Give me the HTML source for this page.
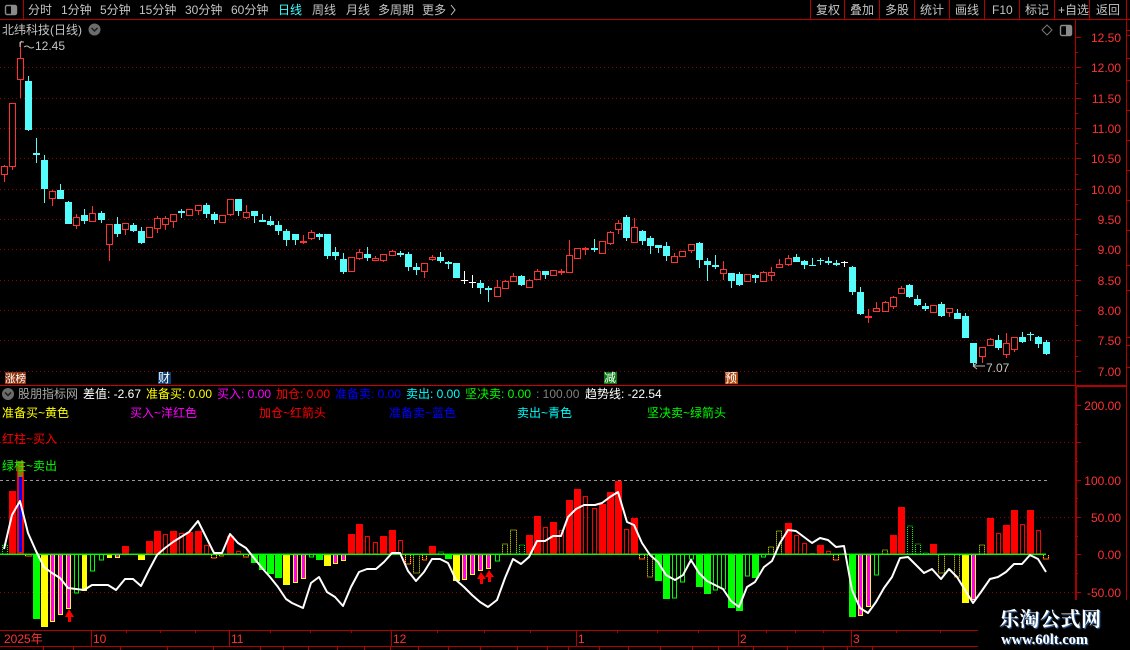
<!DOCTYPE html>
<html lang="zh">
<head>
<meta charset="utf-8">
<title>北纬科技(日线)</title>
<style>
html,body{margin:0;padding:0;background:#000;width:1130px;height:650px;overflow:hidden}
svg{position:absolute;left:0;top:0;display:block}
text{font-family:"Liberation Sans","WenQuanYi Zen Hei","Noto Sans CJK SC",sans-serif;font-size:12px;white-space:pre}
.tb text{fill:#c4c4c4}
.ax text{fill:#ff3232;text-anchor:end}
.wm{position:absolute;color:#fff;white-space:nowrap;font-weight:bold;text-shadow:1px 1px 1px #3f78c0}
</style>
</head>
<body>
<svg width="1130" height="650" viewBox="0 0 1130 650" xmlns="http://www.w3.org/2000/svg">
<g shape-rendering="crispEdges">
<!-- grids main -->
<path d="M0 67.5H1075M0 98.5H1075M0 128.5H1075M0 158.5H1075M0 189.5H1075M0 219.5H1075M0 249.5H1075M0 280.5H1075M0 310.5H1075M0 340.5H1075M0 371.5H1075M0 442.5H1075M0 517.5H1075M0 592.5H1075" stroke="#8c0000" stroke-dasharray="1 3" fill="none"/>
<!-- frame lines -->
<path d="M0 19.5H1130M23.5 0V19M810.5 0V19M844.5 0V19M879.5 0V19M914.5 0V19M949.5 0V19M984.5 0V19M1019.5 0V19M1054.5 0V19M1089.5 0V19M1126.5 0V600M1075.5 20V385" stroke="#b40000" fill="none"/>
<rect x="0" y="385" width="1075" height="1" fill="#d00000"/>
<rect x="1075" y="385" width="52" height="2" fill="#b40000"/>
<rect x="1075" y="385" width="2" height="215" fill="#a80000"/>
<path d="M1075 37.5h6M1075 67.5h6M1075 98.5h6M1075 128.5h6M1075 158.5h6M1075 189.5h6M1075 219.5h6M1075 249.5h6M1075 280.5h6M1075 310.5h6M1075 340.5h6M1075 371.5h6M1075 52.5h3M1075 83.5h3M1075 113.5h3M1075 143.5h3M1075 174.5h3M1075 204.5h3M1075 234.5h3M1075 265.5h3M1075 295.5h3M1075 325.5h3M1075 356.5h3M1075 405.5h6M1075 442.5h6M1075 480.5h6M1075 517.5h6M1075 554.5h6M1075 592.5h6M1075 424.5h3M1075 461.5h3M1075 498.5h3M1075 536.5h3M1075 573.5h3M1127 30.5h3M1127 35.5h3M1127 58.5h3M1127 80.5h3M1127 110.5h3M1127 140.5h3M1127 170.5h3M1127 200.5h3M1127 230.5h3M1127 265.5h3M1127 290.5h3M1127 337.5h3M1127 345.5h3M1127 367.5h3" stroke="#b40000" fill="none"/>

<!-- red candle wicks -->
<path stroke="#ff3232" fill="none" d="M4.5 165V182M12.5 103V170M20.5 42V98M52.5 190V206M76.5 214V229M92.5 206V221M109.5 224V261M125.5 223V235M149.5 227V237M157.5 216V233M165.5 216V230M173.5 214V228M189.5 209V215M198.5 205V215M222.5 215V223M230.5 199V216M246.5 205V219M303.5 235V244M311.5 230V240M351.5 257V272M359.5 249V260M375.5 256V261M383.5 254V262M392.5 250V256M424.5 263V278M432.5 255V261M497.5 280V296M505.5 280V288M513.5 273V282M529.5 279V287M537.5 269V280M553.5 270V275M561.5 269V275M569.5 240V273M577.5 248V258M585.5 247V255M602.5 241V254M610.5 231V245M618.5 220V234M634.5 218V242M674.5 253V263M682.5 251V257M691.5 244V253M723.5 261V280M747.5 274V282M763.5 271V282M771.5 267V281M779.5 259V268M788.5 255V266M868.5 309V323M876.5 302V311M885.5 301V311M893.5 296V309M901.5 286V294M933.5 305V312M949.5 308V317M982.5 347V363M990.5 338V345M1006.5 333V358M1014.5 337V352"/>
<!-- red candle bodies -->
<path stroke="#ff3232" fill="#000" d="M1.5 166.5h6v8h-6zM9.5 103.5h6v63h-6zM17.5 58.5h6v21h-6zM49.5 191.5h6v7h-6zM73.5 217.5h6v8h-6zM89.5 213.5h6v8h-6zM106.5 224.5h6v20h-6zM122.5 223.5h6v6h-6zM146.5 227.5h6v10h-6zM154.5 218.5h6v10h-6zM162.5 218.5h6v6h-6zM170.5 214.5h6v7h-6zM186.5 209.5h6v6h-6zM195.5 205.5h6v5h-6zM219.5 215.5h6v7h-6zM227.5 199.5h6v15h-6zM243.5 212.5h6v5h-6zM300.5 241.5h6v1h-6zM308.5 232.5h6v6h-6zM348.5 257.5h6v14h-6zM356.5 252.5h6v6h-6zM372.5 258.5h6v2h-6zM380.5 254.5h6v6h-6zM389.5 251.5h6v4h-6zM421.5 263.5h6v8h-6zM429.5 257.5h6v2h-6zM494.5 287.5h6v9h-6zM502.5 281.5h6v7h-6zM510.5 276.5h6v5h-6zM526.5 280.5h6v7h-6zM534.5 271.5h6v8h-6zM550.5 270.5h6v5h-6zM558.5 271.5h6v1h-6zM566.5 255.5h6v17h-6zM574.5 248.5h6v10h-6zM582.5 248.5h6v1h-6zM599.5 241.5h6v12h-6zM607.5 232.5h6v11h-6zM615.5 223.5h6v6h-6zM631.5 227.5h6v15h-6zM671.5 256.5h6v6h-6zM679.5 251.5h6v5h-6zM688.5 244.5h6v6h-6zM720.5 269.5h6v4h-6zM744.5 274.5h6v7h-6zM760.5 272.5h6v9h-6zM768.5 272.5h6v3h-6zM776.5 264.5h6v3h-6zM785.5 258.5h6v6h-6zM865.5 316.5h6v1h-6zM873.5 308.5h6v3h-6zM882.5 302.5h6v9h-6zM890.5 297.5h6v9h-6zM898.5 288.5h6v5h-6zM930.5 305.5h6v7h-6zM946.5 308.5h6v4h-6zM979.5 347.5h6v9h-6zM987.5 339.5h6v6h-6zM1003.5 343.5h6v11h-6zM1011.5 337.5h6v12h-6z"/>
<!-- cyan candle wicks -->
<path stroke="#54fcfc" fill="none" d="M28.5 76V131M36.5 138V163M44.5 155V203M60.5 184V199M68.5 201V224M84.5 209V224M101.5 211V223M117.5 217V237M133.5 223V232M141.5 227V244M181.5 209V218M206.5 203V218M214.5 212V224M238.5 199V216M254.5 211V223M262.5 214V221M270.5 216V226M278.5 221V235M286.5 229V246M295.5 234V245M319.5 233V240M327.5 234V259M335.5 247V260M343.5 253V274M367.5 247V261M400.5 251V257M408.5 252V271M416.5 263V275M440.5 252V263M448.5 261V269M456.5 263V278M480.5 280V294M488.5 286V302M521.5 275V286M545.5 271V279M594.5 239V252M626.5 215V241M642.5 230V245M650.5 236V254M658.5 245V253M666.5 242V261M699.5 242V268M707.5 258V281M715.5 255V269M731.5 273V288M739.5 272V286M755.5 274V283M796.5 254V262M804.5 260V269M812.5 258V266M820.5 258V265M828.5 257V265M836.5 260V266M852.5 266V295M860.5 287V315M909.5 284V298M917.5 295V306M925.5 303V311M941.5 302V317M957.5 309V319M965.5 313V338M973.5 343V366M998.5 335V350M1022.5 332V343M1030.5 332V341M1038.5 336V348M1046.5 340V355"/>
<!-- cyan candle bodies -->
<path fill="#54fcfc" d="M25 81h7v49h-7zM33 153h7v2h-7zM41 160h7v29h-7zM57 190h7v9h-7zM65 202h7v22h-7zM81 215h7v6h-7zM98 213h7v7h-7zM114 224h7v10h-7zM130 225h7v6h-7zM138 231h7v12h-7zM178 211h7v2h-7zM203 205h7v9h-7zM211 214h7v6h-7zM235 199h7v12h-7zM251 211h7v5h-7zM259 220h7v2h-7zM267 221h7v4h-7zM275 225h7v6h-7zM283 231h7v9h-7zM292 234h7v6h-7zM316 234h7v3h-7zM324 234h7v22h-7zM332 252h7v4h-7zM340 259h7v13h-7zM364 254h7v4h-7zM397 253h7v2h-7zM405 254h7v13h-7zM413 267h7v3h-7zM437 257h7v4h-7zM445 262h7v2h-7zM453 263h7v15h-7zM477 283h7v5h-7zM485 288h7v2h-7zM518 276h7v9h-7zM542 271h7v4h-7zM591 248h7v2h-7zM623 217h7v21h-7zM639 231h7v10h-7zM647 238h7v8h-7zM655 245h7v3h-7zM663 246h7v10h-7zM696 243h7v17h-7zM704 261h7v4h-7zM712 265h7v2h-7zM728 273h7v8h-7zM736 274h7v11h-7zM752 275h7v3h-7zM793 257h7v5h-7zM801 261h7v4h-7zM809 265h7v1h-7zM817 260h7v1h-7zM825 261h7v2h-7zM833 263h7v2h-7zM849 267h7v25h-7zM857 292h7v22h-7zM906 285h7v12h-7zM914 299h7v6h-7zM922 306h7v3h-7zM938 304h7v12h-7zM954 313h7v6h-7zM962 316h7v22h-7zM970 343h7v20h-7zM995 340h7v8h-7zM1019 337h7v5h-7zM1027 334h7v1h-7zM1035 337h7v7h-7zM1043 342h7v12h-7z"/>
<!-- white doji -->
<path stroke="#fff" fill="none" d="M464.5 271V284M461 280.5h7M472.5 275V288M469 282.5h7M844.5 261V267M841 262.5h7"/>
<!-- tags -->
<rect x="5" y="372" width="21" height="12" fill="#8b3510"/>
<rect x="158" y="372" width="13" height="12" fill="#0c3f72"/>
<rect x="604" y="372" width="13" height="12" fill="#0a7a14"/>
<rect x="725" y="372" width="13" height="12" fill="#b04a12"/>

<!-- gray 100 line -->
<path stroke="#9a9a9a" stroke-dasharray="3 3" fill="none" d="M0 480.5H1047"/>

<!-- lower bars: red solid -->
<path fill="#ff0000" d="M9 491h7V554h-7zM17 461h7V554h-7zM122 546h7V554h-7zM146 541h7V554h-7zM154 531h7V554h-7zM170 531h7V554h-7zM186 532h7V554h-7zM195 531h7V554h-7zM227 536h7V554h-7zM348 534h7V554h-7zM356 524h7V554h-7zM380 536h7V554h-7zM389 530h7V554h-7zM429 546h7V554h-7zM526 535h7V554h-7zM534 516h7V554h-7zM550 522h7V554h-7zM566 500h7V554h-7zM574 489h7V554h-7zM599 504h7V554h-7zM607 492h7V554h-7zM615 481h7V554h-7zM631 518h7V554h-7zM785 523h7V554h-7zM817 545h7V554h-7zM890 535h7V554h-7zM898 507h7V554h-7zM930 544h7V554h-7zM987 518h7V554h-7zM1003 525h7V554h-7zM1011 510h7V554h-7zM1027 510h7V554h-7z"/>
<rect x="18" y="461" width="5" height="16" fill="#808000"/>
<rect x="19" y="477" width="3" height="75" fill="#0000ff"/>
<!-- red hollow -->
<path fill="none" stroke="#ff0000" d="M163.5 534.5h4V554h-4zM179.5 533.5h4V554h-4zM204.5 545.5h4V554h-4zM236.5 551.5h4V554h-4zM365.5 536.5h4V554h-4zM373.5 542.5h4V554h-4zM398.5 540.5h4V554h-4zM543.5 527.5h4V554h-4zM559.5 530.5h4V554h-4zM583.5 496.5h4V554h-4zM592.5 508.5h4V554h-4zM624.5 529.5h4V554h-4zM794.5 535.5h4V554h-4zM802.5 543.5h4V554h-4zM810.5 553.5h4V554h-4zM826.5 551.5h4V554h-4zM842.5 553.5h4V554h-4zM996.5 533.5h4V554h-4zM1020.5 524.5h4V554h-4zM1036.5 530.5h4V554h-4z"/>
<!-- green solid -->
<path fill="#00ff00" d="M33 555h7V619h-7zM251 555h7V563h-7zM259 555h7V570h-7zM267 555h7V574h-7zM275 555h7V578h-7zM316 555h7V560h-7zM445 555h7V559h-7zM655 555h7V581h-7zM663 555h7V599h-7zM696 555h7V587h-7zM704 555h7V594h-7zM728 555h7V608h-7zM736 555h7V611h-7zM752 555h7V578h-7zM849 555h7V617h-7z"/>
<!-- green hollow -->
<path fill="none" stroke="#00ff00" d="M74.5 555v38h4v-38M90.5 555v16h4v-16M99.5 555v5h4v-5M309.5 555v2h4v-2M495.5 555v6h4v-6M672.5 555v43h4v-43M680.5 555v27h4v-27M689.5 555v4h4v-4M713.5 555v35h4v-35M721.5 555v34h4v-34M745.5 555v21h4v-21M761.5 555v2h4v-2M874.5 555v20h4v-20"/>
<!-- yellow -->
<path fill="#ffff00" d="M41 555h7V627h-7zM283 555h7V585h-7zM324 555h7V566h-7zM453 555h7V581h-7zM962 555h7V603h-7zM138 555h7V560h-7zM82 555h5V591h-5zM107 555h5V558h-5zM50 555h5V622h-5zM58 555h5V615h-5zM66 555h5V609h-5zM115 555h5V558h-5zM293 555h5V583h-5zM301 555h5V579h-5zM333 555h5V564h-5zM341 555h5V561h-5zM462 555h5V580h-5zM470 555h5V575h-5zM478 555h5V571h-5zM486 555h5V569h-5zM858 555h5V616h-5zM866 555h5V607h-5zM971 555h5V600h-5z"/>
<!-- magenta centers -->
<path fill="#ff00ff" d="M51 555h3V621h-3zM59 555h3V614h-3zM67 555h3V608h-3zM116 555h3V557h-3zM294 555h3V582h-3zM302 555h3V578h-3zM334 555h3V563h-3zM342 555h3V560h-3zM463 555h3V579h-3zM471 555h3V574h-3zM479 555h3V570h-3zM487 555h3V568h-3zM859 555h3V615h-3zM867 555h3V606h-3zM972 555h3V599h-3z"/>
<!-- dotted boxes -->
<path fill="none" stroke="#00ff00" stroke-dasharray="1 1" d="M2.5 554v-9h5v9M438.5 554v-2h5v2M519.5 554v-9h5v9M907.5 554v-28h5v28M915.5 554v-10h5v10M923.5 554v-1h5v1"/>
<path fill="none" stroke="#ff0000" d="M502.5 554v-10h5v10M510.5 554v-24h6v24M768.5 554v-7h5v7M776.5 554v-23h5v23M882.5 554v-4h5v4M979.5 554v-9h5v9M413.5 555v18h6v-18M647.5 555v22h5v-22M938.5 555v18h6v-18M954.5 555v22h5v-22M25.5 555v1h6v-1M211.5 555v3h5v-3M219.5 555v1h4v-1M243.5 555v2h5v-2M405.5 555v9h5v-9M422.5 555v5h4v-5M639.5 555v4h5v-4M833.5 555v5h5v-5M1043.5 555v4h5v-4"/>
<path fill="none" stroke="#00ff00" stroke-dasharray="1 1" d="M502.5 554v-10h5v10M510.5 554v-24h6v24M768.5 554v-7h5v7M776.5 554v-23h5v23M882.5 554v-4h5v4M979.5 554v-9h5v9M413.5 555v18h6v-18M647.5 555v22h5v-22M938.5 555v18h6v-18M954.5 555v22h5v-22"/>
<path fill="none" stroke="#ffd000" stroke-dasharray="1 1" d="M25.5 555v1h6v-1M211.5 555v3h5v-3M219.5 555v1h4v-1M243.5 555v2h5v-2M405.5 555v9h5v-9M422.5 555v5h4v-5M639.5 555v4h5v-4M833.5 555v5h5v-5M1043.5 555v4h5v-4"/>
<!-- baseline -->
<rect x="0" y="554" width="1046" height="1" fill="#00ff00"/>
<rect x="0" y="553" width="1046" height="1" fill="#00c800" opacity=".55"/>
</g>
<!-- arrows -->
<path fill="#ff0000" d="M69 609l5 8h-3v5h-3v-5h-3zM481 572l5 7h-3v5h-3v-5h-3zM489 570l5 7h-3v5h-3v-5h-3z"/>
<!-- trend line -->
<polyline fill="none" stroke="#fff" stroke-width="2" stroke-linejoin="round" points="4,549 12,515 20,501 28,533 36,551 44,567 52,573 60,578 68,588 76,589 84,590 92,585 100,585 108,585 116,590 125,579 133,579 141,586 149,570 157,555 165,548 173,542 181,537 189,532 198,521 206,537 214,553 222,553 230,534 238,543 246,548 254,558 262,568 270,577 278,587 286,599 292,603 303,608 311,583 319,577 327,592 335,597 343,606 351,587 359,572 367,569 376,569 384,562 392,553 400,553 408,571 416,581 424,572 432,559 440,559 448,563 456,580 464,587 472,595 480,602 488,607 497,600 505,578 513,559 521,564 529,557 537,541 545,541 553,536 561,536 568,517 576,509 584,505 595,505 602,503 610,497 618,492 627,522 634,525 642,543 650,555 658,562 666,575 675,580 683,575 691,560 699,573 707,581 715,585 723,589 731,601 739,607 747,587 755,582 764,567 772,561 780,543 788,530 796,531 804,537 812,543 820,538 828,540 836,547 844,546 852,590 860,608 868,613 876,602 884,588 892,577 900,558 908,557 916,565 924,573 932,569 941,579 949,569 957,577 965,590 973,603 981,592 990,579 998,577 1006,572 1014,564 1022,564 1030,555 1038,559 1046,572"/>

<!-- time axis -->
<g shape-rendering="crispEdges" fill="none" stroke="#b40000">
<path d="M0 630.5H978M0 646.5H978M91.5 630V646M229.5 630V646M391.5 630V646M576.5 630V646M738.5 630V646M851.5 630V646M126.5 630v3M160.5 630v3M195.5 630v3M270.5 630v3M310.5 630v3M351.5 630v3M437.5 630v3M484.5 630v3M530.5 630v3M617.5 630v3M657.5 630v3M698.5 630v3M766.5 630v3M795.5 630v3M823.5 630v3M896.5 630v3M940.5 630v3M43.5 647v3M73.5 647v3M120.5 647v3M167.5 647v3M213.5 647v3M260.5 647v3M283.5 647v3M308.5 647v3M337.5 647v3M364.5 647v3M390.5 647v3M418.5 647v3M448.5 647v3M480.5 647v3M517.5 647v3M547.5 647v3M568.5 647v3M599.5 647v3M628.5 647v3M660.5 647v3M692.5 647v3M718.5 647v3M753.5 647v3M787.5 647v3M823.5 647v3M847.5 647v3M872.5 647v3"/>
</g>
<g class="ax" style="font-size:12px">
<text x="1121" y="42">12.50</text><text x="1121" y="72">12.00</text><text x="1121" y="103">11.50</text><text x="1121" y="133">11.00</text><text x="1121" y="163">10.50</text><text x="1121" y="194">10.00</text><text x="1121" y="224">9.50</text><text x="1121" y="254">9.00</text><text x="1121" y="285">8.50</text><text x="1121" y="315">8.00</text><text x="1121" y="345">7.50</text><text x="1121" y="376">7.00</text>
<text x="1121" y="410">200.00</text><text x="1121" y="485">100.00</text><text x="1121" y="522">50.00</text><text x="1121" y="559">0.00</text><text x="1121" y="597">-50.00</text>
</g>
<g fill="#ff3232">
<text x="4" y="643" fill="#ff3232">2025年</text><text x="93" y="643" fill="#ff3232">10</text><text x="231" y="643" fill="#ff3232">11</text><text x="393" y="643" fill="#ff3232">12</text><text x="578" y="643" fill="#ff3232">1</text><text x="740" y="643" fill="#ff3232">2</text><text x="853" y="643" fill="#ff3232">3</text>
</g>
<!-- toolbar -->
<g class="tb">
<text x="28" y="14">分时</text><text x="61" y="14">1分钟</text><text x="100" y="14">5分钟</text><text x="139" y="14">15分钟</text><text x="185" y="14">30分钟</text><text x="231" y="14">60分钟</text><text x="278" y="14" style="fill:#40ffff">日线</text><text x="312" y="14">周线</text><text x="346" y="14">月线</text><text x="378" y="14">多周期</text><text x="422" y="14">更多</text>
<path d="M451 5l4 5-4 5" fill="none" stroke="#c4c4c4"/>
<text x="816" y="14">复权</text><text x="850" y="14">叠加</text><text x="885" y="14">多股</text><text x="920" y="14">统计</text><text x="955" y="14">画线</text><text x="992" y="14">F10</text><text x="1025" y="14">标记</text><text x="1058" y="14">+自选</text><text x="1096" y="14">返回</text>
<text x="2" y="34">北纬科技(日线)</text>
<text x="35" y="50">12.45</text>
<text x="986" y="372">7.07</text>
<text x="18" y="398" style="fill:#a8a8a8">股朋指标网</text>
</g>
<path d="M20 44h1M20 42v5M20 43l2-2M20 42h4M24 47q3-2 5 0t5 0" fill="none" stroke="#bdbdbd"/>
<path d="M973 366h12M973 366l4-3M973 366l4 3" fill="none" stroke="#bdbdbd"/>
<!-- window icons -->
<rect x="5.5" y="5.5" width="11" height="9" rx="1.5" fill="none" stroke="#8a8a8a" stroke-width="1.4"/><rect x="11" y="6" width="5" height="8" fill="#8a8a8a"/>
<rect x="1060.5" y="25.5" width="11" height="10" rx="1.5" fill="none" stroke="#8a8a8a" stroke-width="1.4"/><rect x="1066" y="26" width="5" height="9" fill="#8a8a8a"/>
<path d="M1047 25l5 5-5 5-5-5z" fill="none" stroke="#777"/>
<circle cx="94.5" cy="29.5" r="6" fill="#6c6c6c"/><path d="M91.5 28l3 3 3-3" fill="none" stroke="#1c1c1c" stroke-width="1.5"/>
<circle cx="8" cy="394" r="6" fill="#6c6c6c"/><path d="M5 392.5l3 3 3-3" fill="none" stroke="#1c1c1c" stroke-width="1.5"/>
<!-- tag text -->
<g fill="#fff">
<text x="5" y="382" fill="#fff" style="font-size:10.5px">涨榜</text>
<text x="158" y="382" fill="#fff">财</text>
<text x="604" y="382" fill="#fff">减</text>
<text x="725" y="382" fill="#fff">预</text>
</g>
<!-- header row -->
<text x="83" y="398" fill="#fff">差值: -2.67</text>
<text x="146" y="398" fill="#ffff00">准备买: 0.00</text>
<text x="217" y="398" fill="#ff00ff">买入: 0.00</text>
<text x="276" y="398" fill="#ff0000">加仓: 0.00</text>
<text x="335" y="398" fill="#0000ff">准备卖: 0.00</text>
<text x="406" y="398" fill="#00ffff">卖出: 0.00</text>
<text x="465" y="398" fill="#00ff00">坚决卖: 0.00</text>
<text x="536" y="398" fill="#808080">: 100.00</text>
<text x="585" y="398" fill="#fff">趋势线: -22.54</text>
<text x="2" y="417" fill="#ffff00">准备买~黄色</text>
<text x="130" y="417" fill="#ff00ff">买入~洋红色</text>
<text x="259" y="417" fill="#ff0000">加仓~红箭头</text>
<text x="389" y="417" fill="#0000ff">准备卖~蓝色</text>
<text x="517" y="417" fill="#00ffff">卖出~青色</text>
<text x="647" y="417" fill="#00ff00">坚决卖~绿箭头</text>
<text x="2" y="443" fill="#ff0000">红柱~买入</text>
<text x="2" y="470" fill="#00ff00">绿柱~卖出</text>
<rect x="978" y="601" width="148" height="49" fill="#000"/>
<rect x="1126" y="600" width="4" height="50" fill="#000"/>
<rect x="1075" y="600" width="2" height="1" fill="#000"/>
</svg>
<div class="wm" style="left:999px;top:606px;font:bold 20px/24px 'Noto Serif CJK SC',serif;letter-spacing:.5px">乐淘公式网</div>
<div class="wm" style="left:1001px;top:631px;font:bold 14.5px/18px 'Liberation Serif',serif">www.60lt.com</div>
</body>
</html>
